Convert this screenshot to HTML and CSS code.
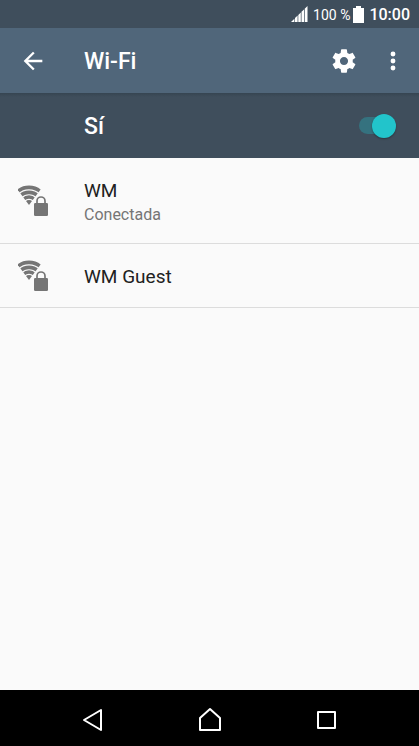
FILE: index.html
```html
<!DOCTYPE html>
<html lang="es">
<head>
<meta charset="utf-8">
<meta name="viewport" content="width=device-width, initial-scale=1">
<title>Wi-Fi</title>
<link rel="stylesheet" href="styles.css">
</head>
<body>
<svg class="defs" aria-hidden="true">
  <symbol id="wifi-lock" viewBox="0 0 30 32">
    <clipPath id="fan"><path d="M11 20L-1 4V0H23V4Z"/></clipPath>
    <g clip-path="url(#fan)" fill="none" stroke="currentColor">
      <circle cx="11" cy="20" r="17.6" stroke-width="3.6"/>
      <circle cx="11" cy="20" r="12.6" stroke-width="3.6"/>
      <circle cx="11" cy="20" r="8" stroke-width="3.3"/>
      <circle cx="11" cy="20" r="2.6" stroke-width="4.6"/>
    </g>
    <rect x="16" y="18" width="14" height="13" rx="1.3" fill="currentColor"/>
    <path d="M19 19V16A4 4 0 0 1 27 16V19" fill="none" stroke="currentColor" stroke-width="1.7"/>
  </symbol>
</svg>
<div class="screen">
  <div class="status">
    <svg class="signal" viewBox="0 0 17 16" aria-hidden="true"><path d="M0 16L3.4 12.7V16ZM4 12.1L6.6 9.6V16H4ZM7.3 8.9L9.8 6.5V16H7.3ZM10.5 5.8L13 3.4V16H10.5ZM13.7 2.7L16.5 0V16H13.7Z"/></svg>
    <span class="percent">100 %</span>
    <svg class="battery" viewBox="0 0 11 17" aria-hidden="true"><path d="M3 0H8V2H11V17H0V2H3Z"/></svg>
    <time class="clock">10:00</time>
  </div>
  <header class="appbar">
    <button class="icon-button" aria-label="Atrás"><svg viewBox="0 0 24 24"><path d="M20 11H7.83l5.59-5.59L12 4l-8 8 8 8 1.41-1.41L7.83 13H20v-2z"/></svg></button>
    <h1 class="title">Wi-Fi</h1>
    <button class="icon-button" aria-label="Ajustes"><svg viewBox="0 0 24 24"><path d="M19.43 12.98c.04-.32.07-.64.07-.98s-.03-.66-.07-.98l2.11-1.65c.19-.15.24-.42.12-.64l-2-3.46c-.12-.22-.39-.3-.61-.22l-2.49 1c-.52-.4-1.08-.73-1.69-.98l-.38-2.65C14.46 2.18 14.25 2 14 2h-4c-.25 0-.46.18-.49.42l-.38 2.65c-.61.25-1.17.59-1.69.98l-2.49-1c-.23-.09-.49 0-.61.22l-2 3.46c-.13.22-.07.49.12.64l2.11 1.65c-.04.32-.07.65-.07.98s.03.66.07.98l-2.11 1.65c-.19.15-.24.42-.12.64l2 3.46c.12.22.39.3.61.22l2.49-1c.52.4 1.08.73 1.69.98l.38 2.65c.03.24.24.42.49.42h4c.25 0 .46-.18.49-.42l.38-2.65c.61-.25 1.17-.59 1.69-.98l2.49 1c.23.09.49 0 .61-.22l2-3.46c.12-.22.07-.49-.12-.64l-2.11-1.65zM12 15.5c-1.93 0-3.5-1.57-3.5-3.5s1.57-3.5 3.5-3.5 3.5 1.57 3.5 3.5-1.57 3.5-3.5 3.5z"/></svg></button>
    <button class="icon-button" aria-label="Más opciones"><svg viewBox="0 0 24 24"><circle cx="12" cy="6" r="2.1"/><circle cx="12" cy="12" r="2.1"/><circle cx="12" cy="18" r="2.1"/></svg></button>
  </header>
  <div class="switchbar">
    <label class="switch-label" for="wifi">Sí</label>
    <input class="switch" id="wifi" type="checkbox" role="switch" checked>
  </div>
  <main class="networks">
    <a class="network connected" href="#wm">
      <svg class="wifi" aria-hidden="true"><use href="#wifi-lock"/></svg>
      <span class="text"><span class="name">WM</span><span class="state">Conectada</span></span>
    </a>
    <a class="network" href="#wm-guest">
      <svg class="wifi" aria-hidden="true"><use href="#wifi-lock"/></svg>
      <span class="text"><span class="name">WM Guest</span></span>
    </a>
  </main>
  <nav class="navbar">
    <button class="nav-button" aria-label="Atrás"><svg viewBox="0 0 26 26"><path d="M4 13L21 3V23Z"/></svg></button>
    <button class="nav-button" aria-label="Inicio"><svg viewBox="0 0 26 26"><path d="M3 11L13 2L23 11V23H3Z"/></svg></button>
    <button class="nav-button" aria-label="Recientes"><svg viewBox="0 0 26 26"><path d="M4 5H21V21H4Z"/></svg></button>
  </nav>
</div>
</body>
</html>
```
FILE: styles.css
```css
* {
  box-sizing: border-box;
}

body {
  margin: 0;
  font-family: Roboto, "Liberation Sans", sans-serif;
  background: #fafafa;
  color: #212121;
}

.defs {
  position: absolute;
  width: 0;
  height: 0;
}

.screen {
  min-height: 100vh;
  display: flex;
  flex-direction: column;
}

.status {
  height: 28px;
  padding-right: 9px;
  display: flex;
  align-items: center;
  justify-content: flex-end;
  background: #3f4e5c;
  color: #fff;
  fill: #fff;
}

.signal {
  width: 17px;
  height: 16px;
  margin-right: 5px;
}

.percent {
  padding-top: 1px;
  font-size: 14px;
  margin-right: 3px;
}

.battery {
  width: 11px;
  height: 17px;
  margin-right: 5px;
}

.clock {
  padding-top: 1px;
  font-size: 16px;
  font-weight: 500;
}

.appbar,
.switchbar {
  height: 65px;
  display: flex;
  align-items: center;
  color: #fff;
}

.appbar {
  padding: 0 8px 0 15px;
  background: #50667a;
}

.icon-button {
  width: 36px;
  height: 48px;
  padding: 0;
  border: 0;
  background: none;
  display: grid;
  place-items: center;
}

.icon-button svg {
  width: 28px;
  height: 28px;
  fill: #fff;
}

.title {
  flex: 1;
  margin: 0 0 0 33px;
}

.title,
.switch-label {
  padding-top: 3px;
  font-size: 23px;
  line-height: 28px;
  font-weight: 500;
}

.icon-button + .icon-button {
  margin-left: 13px;
}

.switchbar {
  padding: 0 23px 0 84px;
  justify-content: space-between;
  background: linear-gradient(#364552, #3f4e5c 4px);
}

.switch {
  appearance: none;
  position: relative;
  width: 37px;
  height: 24px;
  margin: 0;
  display: flex;
  align-items: center;
  justify-content: flex-end;
}

.switch::before {
  content: "";
  flex: 1;
  height: 17px;
  margin-right: -18px;
  border-radius: 9px;
  background: #35727f;
}

.switch::after {
  content: "";
  width: 24px;
  height: 24px;
  border-radius: 50%;
  background: #22c4cb;
  box-shadow: 0 1px 2px #0005;
}

.networks {
  flex: 1;
}

.network {
  min-height: 64px;
  padding-left: 18px;
  display: flex;
  align-items: center;
  gap: 36px;
  border-bottom: 1px solid #dcdcdc;
  color: inherit;
  text-decoration: none;
}

.connected {
  min-height: 86px;
}

.wifi {
  width: 30px;
  height: 32px;
  color: #757575;
}

.text {
  padding-top: 2px;
  display: flex;
  flex-direction: column;
}

.name {
  font-size: 19px;
  line-height: 26px;
}

.state {
  font-size: 16px;
  line-height: 22px;
  color: #757575;
}

.navbar {
  height: 56px;
  padding: 4px 34px 0 35px;
  display: flex;
  background: #000;
}

.nav-button {
  flex: 1;
  padding: 0;
  border: 0;
  background: none;
  display: grid;
  place-items: center;
}

.nav-button svg {
  width: 26px;
  height: 26px;
  fill: none;
  stroke: #fff;
  stroke-width: 2;
  stroke-linejoin: round;
}
```
